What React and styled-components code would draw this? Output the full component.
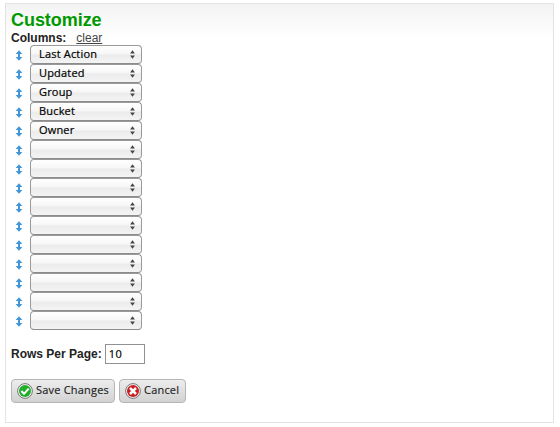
import React from "react";
import styled, { createGlobalStyle } from "styled-components";

const GlobalStyle = createGlobalStyle`
  * { box-sizing: border-box; }
  body { margin: 0; background: #fff; }
`;

const Panel = styled.main`
  width: 549px;
  height: 420px;
  margin: 3px 0 0 5px;
  padding: 6px 5px 0;
  border: 1px solid #e3e3e3;
  background: linear-gradient(#f3f3f3, #fff 36px);
  font-family: "Liberation Sans", Arial, sans-serif;
  font-size: 12px;
  color: #222;
`;

const Title = styled.h1`
  margin: 0;
  font-size: 18px;
  line-height: 20px;
  height: 20px;
  color: #009900;
  letter-spacing: -0.05px;
`;

const ColumnsHeader = styled.div`
  display: flex;
  gap: 10px;
  height: 15px;
  line-height: 17px;
`;

const Label = styled.label`
  font-weight: bold;
`;

const ClearLink = styled.a`
  color: #444;
  text-decoration: underline;
`;

const ColumnList = styled.div`
  display: flex;
  flex-direction: column;
`;

const ColumnRow = styled.div`
  display: flex;
  height: 19px;
`;

const DragHandle = styled.svg`
  width: 8px;
  height: 11px;
  margin: 5px 7px 0 4px;
  fill: #3f96dc;
`;

const SelectBox = styled.div`
  display: flex;
  justify-content: space-between;
  width: 112px;
  height: 19px;
  padding: 0 6px 0 8px;
  border: 1px solid #999;
  border-bottom-color: #8c8c8c;
  border-radius: 4px;
  background: linear-gradient(#fff, #f6f6f6 48%, #ebebeb 52%, #f4f4f4);
  font: 500 11px/15px "Open Sans", "Noto Sans", sans-serif;
  letter-spacing: 0.18px;
  color: #000;
  -webkit-text-stroke: 0.2px #000;
  white-space: nowrap;
`;

const Chevrons = styled.svg`
  flex: none;
  width: 5px;
  height: 9px;
  margin-top: 4px;
  fill: #444;
`;

const RowsPerPage = styled.div`
  display: flex;
  align-items: center;
  gap: 3px;
  height: 20px;
  margin-top: 14px;
`;

const RowsInput = styled.input`
  width: 40px;
  height: 20px;
  padding: 0 3px 2px;
  border: 1px solid #929292;
  border-radius: 0;
  background: #fff;
  color: #000;
  font: 500 11px "Open Sans", "Noto Sans", sans-serif;
  letter-spacing: 0.5px;
  -webkit-text-stroke: 0.2px #000;
  outline: none;
`;

const Actions = styled.div`
  display: flex;
  gap: 4px;
  margin-top: 15px;
`;

const ActionButton = styled.button`
  display: flex;
  align-items: center;
  gap: 3px;
  width: ${(p) => p.$width};
  height: 24px;
  padding: 0 0 0 5px;
  border: 1px solid #b5b5b5;
  border-radius: 4px;
  background: linear-gradient(#ededed, #d2d2d2);
  color: #222;
  font: 500 11px/20px "Open Sans", "Noto Sans", sans-serif;
  letter-spacing: 0.2px;
  -webkit-text-stroke: 0.15px #222;
  white-space: nowrap;
`;

const ButtonText = styled.span`
  height: 22px;
`;

const StatusIcon = styled.svg`
  flex: none;
  width: 16px;
  height: 16px;
`;

const columns = [
  "Last Action",
  "Updated",
  "Group",
  "Bucket",
  "Owner",
  ...Array(10).fill(""),
];

function Column({ name }) {
  return (
    <ColumnRow>
      <DragHandle viewBox="0 0 8 11">
        <path d="M4 .2 7.4 4H5v3h2.4L4 10.8.6 7H3V4H.6z" />
      </DragHandle>
      <SelectBox role="combobox">
        <span>{name}</span>
        <Chevrons viewBox="0 0 5 9">
          <path d="M2.5.3 4.9 3.5H.1zM2.5 8.7.1 5.5h4.8z" />
        </Chevrons>
      </SelectBox>
    </ColumnRow>
  );
}

function SaveIcon() {
  return (
    <StatusIcon viewBox="0 0 16 16">
      <circle cx="8" cy="8" r="7.4" fill="#f4f4f4" stroke="#777" />
      <circle cx="8" cy="8" r="6" fill="#20ae2b" />
      <path d="m4.4 8 2.6 2.8 4.7-5.2" fill="none" stroke="#fff" strokeWidth="2" />
    </StatusIcon>
  );
}

function CancelIcon() {
  return (
    <StatusIcon viewBox="0 0 16 16">
      <circle cx="8" cy="8" r="7.4" fill="#f4f4f4" stroke="#777" />
      <circle cx="8" cy="8" r="6" fill="#c81e20" />
      <path d="m5 5 6 6m0-6-6 6" fill="none" stroke="#fff" strokeWidth="2.5" />
    </StatusIcon>
  );
}

export default function App() {
  return (
    <>
      <GlobalStyle />
      <Panel>
        <Title>Customize</Title>
        <ColumnsHeader>
          <Label>Columns:</Label>
          <ClearLink>clear</ClearLink>
        </ColumnsHeader>
        <ColumnList>
          {columns.map((name, i) => (
            <Column key={i} name={name} />
          ))}
        </ColumnList>
        <RowsPerPage>
          <Label htmlFor="rows">Rows Per Page:</Label>
          <RowsInput id="rows" defaultValue="10" />
        </RowsPerPage>
        <Actions>
          <ActionButton $width="104px">
            <SaveIcon />
            <ButtonText>Save Changes</ButtonText>
          </ActionButton>
          <ActionButton $width="67px">
            <CancelIcon />
            <ButtonText>Cancel</ButtonText>
          </ActionButton>
        </Actions>
      </Panel>
    </>
  );
}
